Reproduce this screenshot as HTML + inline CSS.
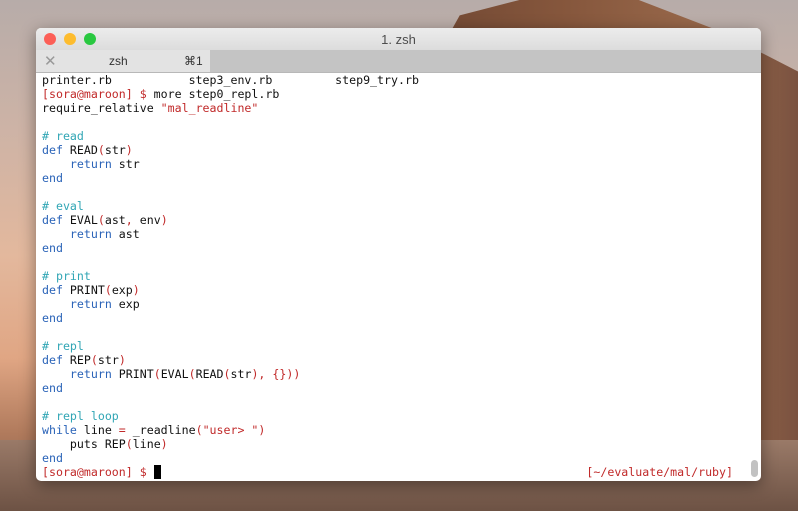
<!DOCTYPE html>
<html><head><style>
html,body{margin:0;padding:0;width:798px;height:511px;overflow:hidden}
body{position:relative;background:linear-gradient(180deg,#b7aca9 0%,#cdb3a6 25%,#e3b89d 50%,#e0a684 70%,#b07a5c 85%,#7a5a4a 100%);}
.rock{position:absolute;left:400px;top:0;width:398px;height:511px;background:linear-gradient(90deg,#6e4632 0%,#85563c 40%,#9a6a4c 80%,#7a5240 100%);clip-path:polygon(8% 100%,10% 10%,15% 3%,30% 0,60% 0,80% 6%,100% 14%,100% 100%)}
.ground{position:absolute;left:0;top:440px;width:798px;height:71px;background:linear-gradient(180deg,#9a7a68,#6d5244)}
.win{position:absolute;left:36px;top:28px;width:725px;height:453px;background:#fff;border-radius:5px;overflow:hidden;box-shadow:0 4px 16px rgba(0,0,0,.4)}
.title{height:22px;background:linear-gradient(#ececec,#dcdcdc);position:relative;font:13px "Liberation Sans",sans-serif;color:#4d4d4d;text-align:center;line-height:24px}
.dot{position:absolute;top:5px;width:12px;height:12px;border-radius:50%}
.tabs{height:22px;background:#c4c4c4;position:relative;border-bottom:1px solid #b8b8b8}
.tab{position:absolute;left:0;top:0;width:174px;height:22px;background:#e3e3e3;font:12px "Liberation Sans",sans-serif;color:#333}
pre{margin:0;position:absolute;left:6px;top:45px;font:11.6px/14px "DejaVu Sans Mono",monospace;color:#111}
.k{color:#2a63b8}.c{color:#31a6b5}.r{color:#c12a2a}
.cur{display:inline-block;width:7px;height:14px;background:#000;vertical-align:top}
.sb{position:absolute;right:3px;top:432px;width:7px;height:17px;border-radius:4px;background:#c2c2c2}
.rp{position:absolute;right:28px;top:437px;font:11.6px/14px "DejaVu Sans Mono",monospace;color:#c12a2a}
</style></head><body>
<div class="rock"></div><div class="ground"></div>
<div class="win">
<div class="title"><span class="dot" style="left:8px;background:#fc5f57"></span><span class="dot" style="left:28px;background:#fdbc2e"></span><span class="dot" style="left:48px;background:#29c840"></span>1. zsh</div>
<div class="tabs"><div class="tab"><span style="position:absolute;left:8px;top:2px;color:#999;font-size:15px">✕</span><span style="position:absolute;left:73px;top:4px">zsh</span><span style="position:absolute;left:148px;top:4px">⌘1</span></div></div>
<pre>printer.rb           step3_env.rb         step9_try.rb
<span class="r">[sora@maroon] $</span> more step0_repl.rb
require_relative <span class="r">"mal_readline"</span>

<span class="c"># read</span>
<span class="k">def</span> READ<span class="r">(</span>str<span class="r">)</span>
    <span class="k">return</span> str
<span class="k">end</span>

<span class="c"># eval</span>
<span class="k">def</span> EVAL<span class="r">(</span>ast<span class="r">,</span> env<span class="r">)</span>
    <span class="k">return</span> ast
<span class="k">end</span>

<span class="c"># print</span>
<span class="k">def</span> PRINT<span class="r">(</span>exp<span class="r">)</span>
    <span class="k">return</span> exp
<span class="k">end</span>

<span class="c"># repl</span>
<span class="k">def</span> REP<span class="r">(</span>str<span class="r">)</span>
    <span class="k">return</span> PRINT<span class="r">(</span>EVAL<span class="r">(</span>READ<span class="r">(</span>str<span class="r">),</span> <span class="r">{}))</span>
<span class="k">end</span>

<span class="c"># repl loop</span>
<span class="k">while</span> line <span class="r">=</span> _readline<span class="r">("user&gt; ")</span>
    puts REP<span class="r">(</span>line<span class="r">)</span>
<span class="k">end</span>
<span class="r">[sora@maroon] $</span> <span class="cur"></span></pre>
<div class="rp">[~/evaluate/mal/ruby]</div>
<div class="sb"></div>
</div>
</body></html>
